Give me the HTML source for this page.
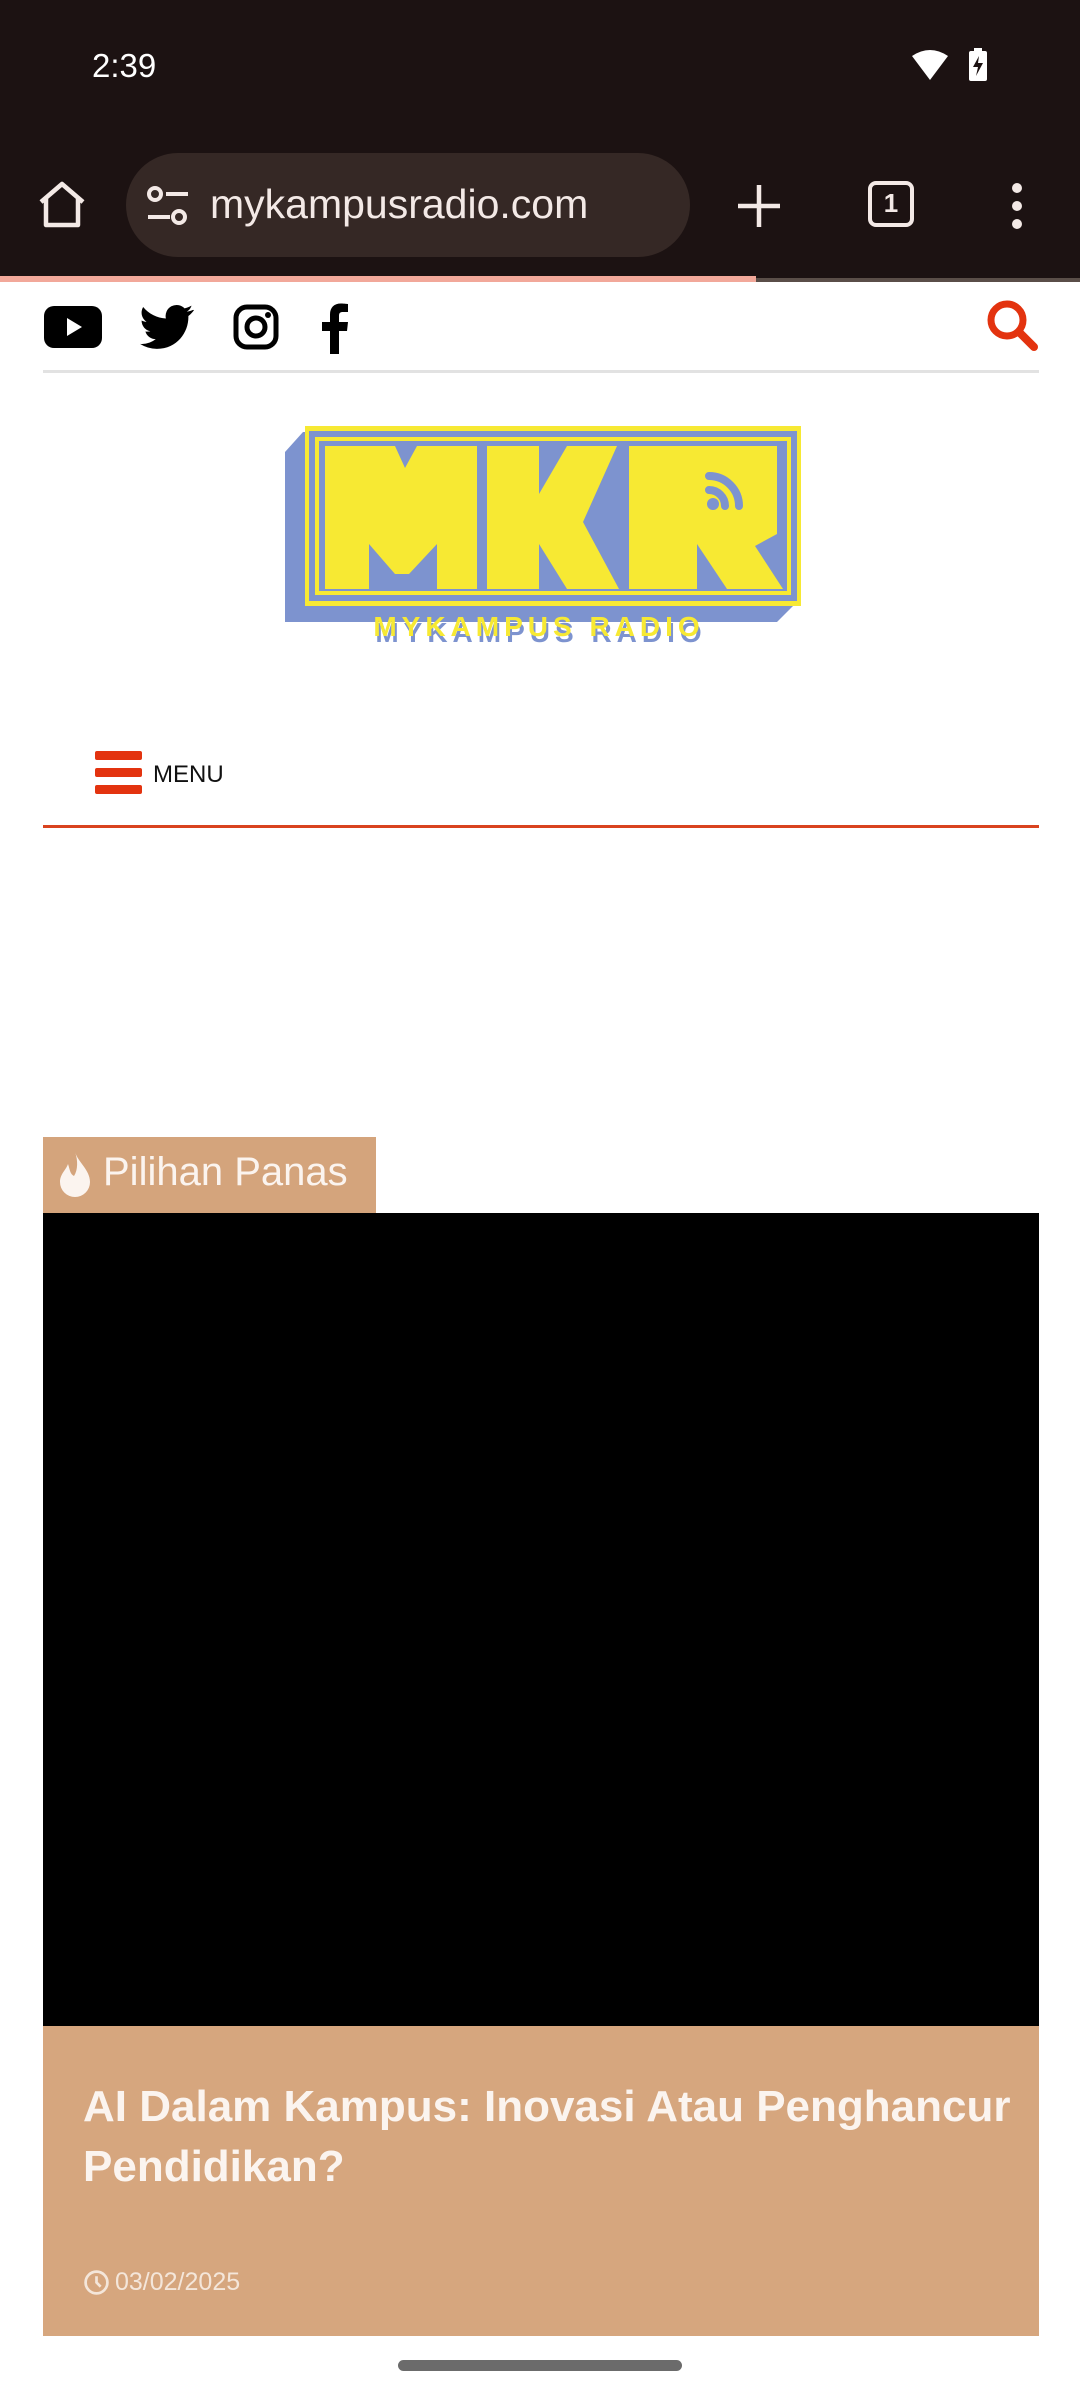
<!DOCTYPE html>
<html><head><meta charset="utf-8"><style>
*{margin:0;padding:0;box-sizing:border-box}
body{width:1080px;height:2400px;background:#fff;position:relative;overflow:hidden;font-family:"Liberation Sans",Roboto,sans-serif}
.abs{position:absolute}
</style></head><body>
<div class="abs" style="left:0;top:0;width:1080px;height:278px;background:#1c1212"></div>
<div class="abs" style="left:92px;top:47px;color:#fff;font-size:33px">2:39</div>
<svg class="abs" style="left:910px;top:48px" width="84" height="36" viewBox="0 0 84 36">
<path d="M2 8 Q20 -4 38 8 L20 32 Z" fill="#fff"/>
<rect x="59" y="3" width="18" height="30" rx="2" fill="#fff"/><rect x="64" y="0" width="8" height="4" fill="#fff"/>
<path d="M69 8 L63 19 L68 19 L66 28 L73 15 L68 15 Z" fill="#1c1212"/>
</svg>
<svg class="abs" style="left:36px;top:180px" width="52" height="50" viewBox="0 0 52 50"><path d="M5 22 L26 4 L47 22 M10 18 V45 H42 V18" fill="none" stroke="#f3e9e6" stroke-width="4.5" stroke-linejoin="round"/></svg>
<div class="abs" style="left:126px;top:153px;width:564px;height:104px;border-radius:52px;background:#352825"></div>
<svg class="abs" style="left:146px;top:186px" width="44" height="40" viewBox="0 0 44 40"><circle cx="9" cy="8" r="6" fill="none" stroke="#f3e9e6" stroke-width="4"/><line x1="20" y1="8" x2="42" y2="8" stroke="#f3e9e6" stroke-width="4"/><circle cx="33" cy="31" r="6" fill="none" stroke="#f3e9e6" stroke-width="4"/><line x1="2" y1="31" x2="24" y2="31" stroke="#f3e9e6" stroke-width="4"/></svg>
<div class="abs" style="left:210px;top:181px;color:#f3e9e6;font-size:41px">mykampusradio.com</div>
<svg class="abs" style="left:736px;top:183px" width="46" height="46"><path d="M23 2V44M2 23H44" stroke="#f3e9e6" stroke-width="4.5"/></svg>
<div class="abs" style="left:868px;top:181px;width:46px;height:46px;border:4.5px solid #f3e9e6;border-radius:8px;color:#f3e9e6;font-size:26px;font-weight:bold;text-align:center;line-height:37px">1</div>
<svg class="abs" style="left:1007px;top:182px" width="20" height="48"><circle cx="10" cy="6" r="5" fill="#f3e9e6"/><circle cx="10" cy="24" r="5" fill="#f3e9e6"/><circle cx="10" cy="42" r="5" fill="#f3e9e6"/></svg>
<div class="abs" style="left:0;top:276px;width:756px;height:6px;background:#f2a89a"></div>
<div class="abs" style="left:756px;top:278px;width:324px;height:4px;background:#5a4e48"></div>

<svg class="abs" style="left:44px;top:306px" width="58" height="42" viewBox="0 0 58 42"><rect x="0" y="0" width="58" height="42" rx="10" fill="#000"/><path d="M23 12 L38 21 L23 30Z" fill="#fff"/></svg>
<svg class="abs" style="left:140px;top:304px" width="54" height="46" viewBox="0 0 24 20"><path d="M23.6 2.4c-.9.4-1.8.6-2.8.8 1-.6 1.8-1.6 2.1-2.7-1 .6-2 1-3.1 1.2A4.9 4.9 0 0 0 11.5 6.2 13.9 13.9 0 0 1 1.4 1.1a4.9 4.9 0 0 0 1.5 6.6c-.8 0-1.6-.3-2.2-.6 0 2.4 1.7 4.4 3.9 4.8-.7.2-1.5.2-2.2.1.6 2 2.4 3.4 4.6 3.4A9.9 9.9 0 0 1 0 17.5 13.9 13.9 0 0 0 7.5 19.7c9.1 0 14-7.5 14-14v-.6c1-.7 1.8-1.6 2.5-2.6z" fill="#000"/></svg>
<svg class="abs" style="left:233px;top:304px" width="46" height="46" viewBox="0 0 46 46"><rect x="3" y="3" width="40" height="40" rx="11" fill="none" stroke="#000" stroke-width="5"/><circle cx="23" cy="23" r="9" fill="none" stroke="#000" stroke-width="5"/><circle cx="35" cy="11" r="3" fill="#000"/></svg>
<svg class="abs" style="left:318px;top:302px" width="32" height="52" viewBox="0 0 32 52"><path d="M21 52V29h8l1-9h-9v-6c0-3 1-4 4-4h5V2c-1 0-4-.5-7-.5-7 0-11 4-11 11v7.5H4v9h8V52z" fill="#000"/></svg>
<svg class="abs" style="left:985px;top:298px" width="56" height="56" viewBox="0 0 56 56"><circle cx="22" cy="22" r="16" fill="none" stroke="#e3330f" stroke-width="7"/><line x1="34" y1="34" x2="49" y2="49" stroke="#e3330f" stroke-width="8" stroke-linecap="round"/></svg>
<div class="abs" style="left:43px;top:370px;width:996px;height:3px;background:#e2e2e2"></div>

<svg class="abs" style="left:277px;top:424px" width="528" height="228" viewBox="0 0 528 228">
<path d="M26 8 H520 V178 L500 198 H8 V28 Z" fill="#7d93cf"/>
<rect x="28" y="2" width="496" height="180" fill="#f7e933"/>
<rect x="32" y="7" width="488" height="170" fill="#7d93cf"/>
<rect x="38" y="13" width="476" height="158" fill="#f7e933"/>
<rect x="42" y="17" width="468" height="150" fill="#7d93cf"/>
<path d="M48 22 H118 L128 44 L140 22 H200 V165 H160 V120 L132 150 L118 150 L92 120 V165 H48 Z" fill="#f7e933"/>
<path d="M210 22 H262 V70 L290 22 H340 L306 98 L342 165 H290 L262 120 V165 H210 Z" fill="#f7e933"/>
<path d="M352 22 H500 V110 L478 122 L506 165 H450 L420 120 V165 H352 Z" fill="#f7e933"/>
<path d="M432 52 a30 30 0 0 1 30 30 M432 66 a16 16 0 0 1 16 16" fill="none" stroke="#7d93cf" stroke-width="8" stroke-linecap="round"/><circle cx="436" cy="80" r="6" fill="#7d93cf"/>
<text x="264" y="218" text-anchor="middle" font-family="Liberation Sans,sans-serif" font-weight="bold" font-size="28" letter-spacing="5" fill="#7d93cf">MYKAMPUS RADIO</text>
<text x="262" y="212" text-anchor="middle" font-family="Liberation Sans,sans-serif" font-weight="bold" font-size="28" letter-spacing="5" fill="#f7e933">MYKAMPUS RADIO</text>
</svg>

<div class="abs" style="left:95px;top:751px;width:47px;height:9px;background:#e3330f;border-radius:2px"></div>
<div class="abs" style="left:95px;top:768px;width:47px;height:9px;background:#e3330f;border-radius:2px"></div>
<div class="abs" style="left:95px;top:785px;width:47px;height:9px;background:#e3330f;border-radius:2px"></div>
<div class="abs" style="left:153px;top:761px;font-size:24px;color:#111">MENU</div>
<div class="abs" style="left:43px;top:825px;width:996px;height:3px;background:#d9431f"></div>

<div class="abs" style="left:43px;top:1137px;width:333px;height:76px;background:#d4a47c"></div>
<svg class="abs" style="left:58px;top:1150px" width="34" height="48" viewBox="0 0 34 48"><path d="M17 2 C20 12 32 20 32 32 A15 15 0 0 1 2 32 C2 24 8 20 10 14 C12 20 12 24 16 26 C20 20 20 10 17 2Z" fill="#fbf4ef"/></svg>
<div class="abs" style="left:103px;top:1150px;font-size:40px;color:#fbf4ef">Pilihan Panas</div>
<div class="abs" style="left:43px;top:1213px;width:996px;height:813px;background:#000"></div>
<div class="abs" style="left:43px;top:2026px;width:996px;height:310px;background:#d6a67e"></div>
<div class="abs" style="left:83px;top:2077px;width:980px;font-size:44px;line-height:60px;color:#fbf4ef;font-weight:bold">AI Dalam Kampus: Inovasi Atau Penghancur Pendidikan?</div>
<svg class="abs" style="left:83px;top:2269px" width="27" height="27" viewBox="0 0 26 26"><circle cx="13" cy="13" r="10.5" fill="none" stroke="#f4e6da" stroke-width="2.6"/><path d="M13 7V13L17 17" fill="none" stroke="#f4e6da" stroke-width="2.6"/></svg>
<div class="abs" style="left:115px;top:2268px;font-size:25px;color:#f4e6da">03/02/2025</div>
<div class="abs" style="left:398px;top:2360px;width:284px;height:11px;border-radius:6px;background:#6b6b6b"></div>
</body></html>
